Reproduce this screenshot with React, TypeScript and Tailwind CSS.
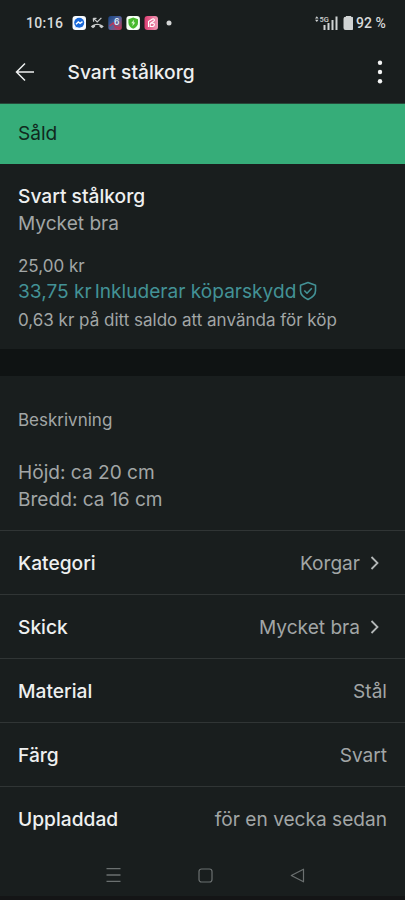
function StatusIcons() {
  return (
    <svg width="102" height="16" viewBox="0 0 102 16" className="ml-2">
      <defs>
        <linearGradient id="game" x1="0" y1="0" x2="1" y2="1">
          <stop offset="0" stopColor="#17417f" />
          <stop offset="0.5" stopColor="#51639b" />
          <stop offset="1" stopColor="#d03450" />
        </linearGradient>
        <linearGradient id="pink" x1="0" y1="0" x2="1" y2="0">
          <stop offset="0" stopColor="#dd3e73" />
          <stop offset="1" stopColor="#ef9bb6" />
        </linearGradient>
      </defs>
      {/* Messenger */}
      <rect x="0.5" y="1" width="13.5" height="14" rx="3" fill="#f6faff" />
      <circle cx="7.2" cy="7.8" r="5" fill="#1767d8" />
      <path d="M3.8 12.8V10h2.5z" fill="#1767d8" />
      <path d="M4 9.3l2.3-2.4 1.8 1.4 2.4-1.7" fill="none" stroke="#fff" strokeWidth="1.4" />
      {/* Missed call */}
      <path d="M21.6 6.8l-.3-3.5M21.3 3.3h3.2M21.5 3.4l3.7 3.5 4.2-4" fill="none" stroke="#c9cccc" strokeWidth="1.2" />
      <path d="M18.8 11.6c3.6-3.8 9.4-3.8 13 0l-2.2 1.7-2.1-1.5v-1.500c-1.5-.5-3-.5-4.4 0v1.500l-2.1 1.500z" fill="#c9cccc" />
      {/* Game */}
      <rect x="36.3" y="1" width="13.5" height="14" rx="2.5" fill="url(#game)" />
      <path d="M37.5 11l4-3 2 4 5 1" fill="none" stroke="#bd3655" strokeWidth="1.5" />
      <text x="42" y="10" fill="#dce9f5" fontSize="8.5" fontWeight="600" fontFamily="Inter, sans-serif">6</text>
      {/* Security */}
      <rect x="54.4" y="1" width="13.5" height="14" rx="3" fill="#f7fff5" />
      <path d="M61.2 2.500l4.800 1.700v3.600c0 2.800-1.900 4.800-4.800 5.900-2.900-1.100-4.800-3.100-4.800-5.900V4.200z" fill="#48b92d" />
      <path d="M62 4.700l-2.800 3.600h1.700l-.5 2.900 2.900-3.800h-1.700z" fill="#dff9d5" />
      {/* Shop */}
      <rect x="72.5" y="1" width="13.5" height="14" rx="3" fill="url(#pink)" />
      <path d="M76.500 12V6.500l4-2.500c2-.8 2.800 1.500.8 2.500l-2.800 1.700h2.700c1.800.2 1.500 3-.5 3.300h-2.500V8.500" fill="none" stroke="#fff" strokeWidth="1.100" strokeLinejoin="round" />
      <circle cx="97" cy="8" r="2.5" fill="#d3d5d5" />
    </svg>
  )
}

function StatusBar() {
  return (
    <div className="flex h-[46px] items-center pl-[26px] pr-[20px] text-[#d8dada]">
      <span className="w-[38px] whitespace-nowrap font-[Roboto] text-[14px] font-medium tracking-[0.35px]">10:16</span>
      <StatusIcons />
      <svg width="38" height="16" viewBox="0 0 38 16" className="ml-auto" fill="#d0d3d3">
        <path d="M0 3.500L1.800 1.300 3.600 3.500zM0 4.800L1.800 7 3.600 4.800z" />
        <text x="4.5" y="7" fontSize="7.5" fontWeight="500" fontFamily="Roboto, sans-serif">5G</text>
        <path d="M8.500 10h2v5h-2zM12.500 8h2v7h-2zM16.500 5h2v10h-2zM20.500 1.500h2V15h-2z" />
        <path d="M31 1h5v.7h.5a2 2 0 0 1 2 2V13a2 2 0 0 1-2 2h-6a2 2 0 0 1-2-2V3.700a2 2 0 0 1 2-2h.5z" />
      </svg>
      <span className="ml-[3px] w-[29px] whitespace-nowrap font-[Roboto] text-[14px] font-medium">92 %</span>
    </div>
  )
}

const details = [
  { label: 'Kategori', value: 'Korgar', link: true },
  { label: 'Skick', value: 'Mycket bra', link: true },
  { label: 'Material', value: 'Stål', link: false },
  { label: 'Färg', value: 'Svart', link: false },
  { label: 'Uppladdad', value: 'för en vecka sedan', link: false },
]

export default function App() {
  return (
    <div className="flex h-[900px] w-[405px] flex-col overflow-hidden bg-[#191e1e] font-[Inter,sans-serif] text-[19.1px] leading-[27px] text-[#a2a6a6]">
      <StatusBar />

      <header className="flex h-[58px] items-center border-b border-[#27493a] pb-[6px] pl-[15px] pr-[22px]">
        <svg width="20" height="20" viewBox="0 0 20 20" fill="none" stroke="#eef0f0" strokeWidth="1.5">
          <path d="M19 10H1.500M10 1.500L1.500 10l8.500 8.500" />
        </svg>
        <h1 className="ml-[32.5px] pt-px text-[19.2px] font-medium text-[#eef0f0]">Svart stålkorg</h1>
        <svg width="6" height="24" viewBox="0 0 6 24" fill="#f3f4f4" className="ml-auto">
          <circle cx="3" cy="2.7" r="2.2" />
          <circle cx="3" cy="12" r="2.2" />
          <circle cx="3" cy="21.3" r="2.2" />
        </svg>
      </header>

      <div className="h-[60px] bg-[#36ad79] px-[18px] pt-[16px] text-[#10291d]">Såld</div>

      {/* Summary */}
      <section className="h-[185px] px-[18px] pt-[19px]">
        <h2 className="text-[19.2px] font-medium text-[#eef0f0]">Svart stålkorg</h2>
        <p>Mycket bra</p>
        <p className="mt-[17px] text-[17px] leading-[24px]">25,00 kr</p>
        <div className="flex items-center whitespace-nowrap text-[#439296]">
          <span>33,75 kr</span>
          <span className="ml-[3px]">Inkluderar köparskydd</span>
          <svg width="18" height="20" viewBox="0 0 18 20" fill="none" stroke="#439296" strokeWidth="1.6" strokeLinejoin="round" className="ml-[3px] -mt-0.5">
            <path d="M9 1.500l7.500 2.700v5.600c0 4.200-3.200 6.800-7.500 8.700-4.300-1.900-7.500-4.500-7.500-8.700V4.200zM5.300 9.500l2.700 2.700 4.800-5" />
          </svg>
        </div>
        <p className="mt-[3px] whitespace-nowrap text-[17px] leading-[24px]">0,63 kr på ditt saldo att använda för köp</p>
      </section>

      <div className="h-[27px] bg-[#0f1313]" />

      {/* Description */}
      <section className="h-[154px] px-[18px] pt-[32px]">
        <h3 className="text-[17px] leading-[24px]">Beskrivning</h3>
        <p className="mt-[27px]">Höjd: ca 20 cm</p>
        <p>Bredd: ca 16 cm</p>
      </section>

      {/* Details */}
      <dl>
        {details.map((item) => (
          <div key={item.label} className="flex h-[64px] items-center border-t border-[#303535] px-[18px] pt-px">
            <dt className="pt-px text-[19.2px] font-medium text-[#eef0f0]">{item.label}</dt>
            <dd className="ml-auto flex items-center whitespace-nowrap">
              <span className="pt-px">{item.value}</span>
              {item.link && (
                <svg width="9" height="14" viewBox="0 0 9 14" fill="none" stroke="#b4b8b8" strokeWidth="1.8" className="ml-[10px] mr-[8px]">
                  <path d="M1.500 1l6 6-6 6" />
                </svg>
              )}
            </dd>
          </div>
        ))}
      </dl>

      <nav className="flex h-[46px] items-center justify-between pl-[106px] pr-[100px] pt-[4px]">
        <svg width="15" height="16" viewBox="0 0 15 16" stroke="#6b7070" strokeWidth="1.3">
          <path d="M0.500 1.700h14M0.500 8h14M0.500 14.300h14" />
        </svg>
        <svg width="15" height="15" viewBox="0 0 15 15" fill="none" stroke="#6b7070" strokeWidth="1.2">
          <rect x="1" y="1" width="13" height="13" rx="2.5" />
        </svg>
        <svg width="15" height="15" viewBox="0 0 15 15" fill="none" stroke="#6b7070" strokeWidth="1.2" strokeLinejoin="round">
          <path d="M13.500 1.200v12.600L1.300 7.500z" />
        </svg>
      </nav>
      <div className="h-1 bg-[#141516]" />
    </div>
  )
}
